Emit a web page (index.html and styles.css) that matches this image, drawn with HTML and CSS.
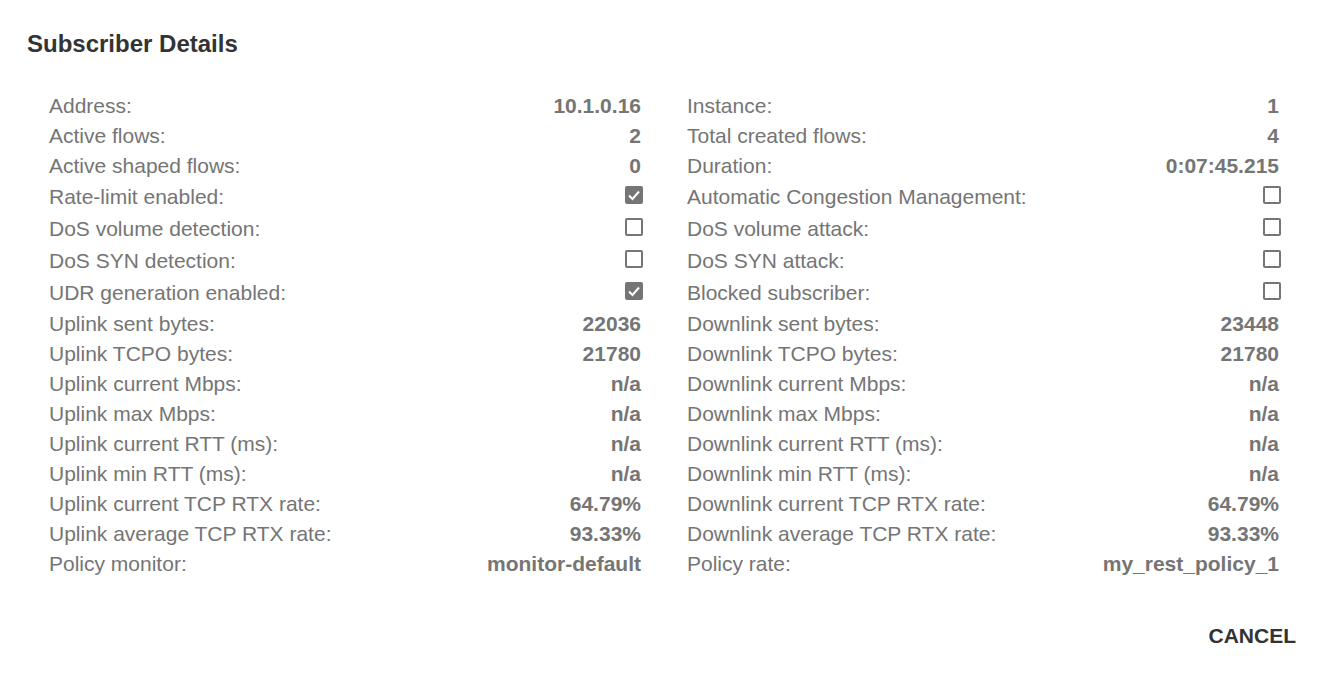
FILE: index.html
```html
<!DOCTYPE html>
<html lang="en">
<head>
  <meta charset="UTF-8" />
  <meta name="viewport" content="width=device-width, initial-scale=1" />
  <title>Subscriber Details</title>
  <link rel="stylesheet" href="styles.css">
</head>
<body>
  <div class="dialog">
    <h2 class="dialog-title">Subscriber Details</h2>

    <div class="details">
      <div class="row"><span class="label">Address:</span><span class="value">10.1.0.16</span></div>
      <div class="row"><span class="label">Instance:</span><span class="value">1</span></div>

      <div class="row"><span class="label">Active flows:</span><span class="value">2</span></div>
      <div class="row"><span class="label">Total created flows:</span><span class="value">4</span></div>

      <div class="row"><span class="label">Active shaped flows:</span><span class="value">0</span></div>
      <div class="row"><span class="label">Duration:</span><span class="value">0:07:45.215</span></div>

      <!-- checkbox rows -->
      <div class="row check-row"><span class="label">Rate-limit enabled:</span><span class="box checked"><svg viewBox="0 0 18 18"><polyline points="4,9.5 7.5,13 14,5.5" /></svg></span></div>
      <div class="row check-row"><span class="label">Automatic Congestion Management:</span><span class="box"></span></div>

      <div class="row check-row"><span class="label">DoS volume detection:</span><span class="box"></span></div>
      <div class="row check-row"><span class="label">DoS volume attack:</span><span class="box"></span></div>

      <div class="row check-row"><span class="label">DoS SYN detection:</span><span class="box"></span></div>
      <div class="row check-row"><span class="label">DoS SYN attack:</span><span class="box"></span></div>

      <div class="row check-row"><span class="label">UDR generation enabled:</span><span class="box checked"><svg viewBox="0 0 18 18"><polyline points="4,9.5 7.5,13 14,5.5" /></svg></span></div>
      <div class="row check-row"><span class="label">Blocked subscriber:</span><span class="box"></span></div>

      <div class="row"><span class="label">Uplink sent bytes:</span><span class="value">22036</span></div>
      <div class="row"><span class="label">Downlink sent bytes:</span><span class="value">23448</span></div>

      <div class="row"><span class="label">Uplink TCPO bytes:</span><span class="value">21780</span></div>
      <div class="row"><span class="label">Downlink TCPO bytes:</span><span class="value">21780</span></div>

      <div class="row"><span class="label">Uplink current Mbps:</span><span class="value">n/a</span></div>
      <div class="row"><span class="label">Downlink current Mbps:</span><span class="value">n/a</span></div>

      <div class="row"><span class="label">Uplink max Mbps:</span><span class="value">n/a</span></div>
      <div class="row"><span class="label">Downlink max Mbps:</span><span class="value">n/a</span></div>

      <div class="row"><span class="label">Uplink current RTT (ms):</span><span class="value">n/a</span></div>
      <div class="row"><span class="label">Downlink current RTT (ms):</span><span class="value">n/a</span></div>

      <div class="row"><span class="label">Uplink min RTT (ms):</span><span class="value">n/a</span></div>
      <div class="row"><span class="label">Downlink min RTT (ms):</span><span class="value">n/a</span></div>

      <div class="row"><span class="label">Uplink current TCP RTX rate:</span><span class="value">64.79%</span></div>
      <div class="row"><span class="label">Downlink current TCP RTX rate:</span><span class="value">64.79%</span></div>

      <div class="row"><span class="label">Uplink average TCP RTX rate:</span><span class="value">93.33%</span></div>
      <div class="row"><span class="label">Downlink average TCP RTX rate:</span><span class="value">93.33%</span></div>

      <div class="row"><span class="label">Policy monitor:</span><span class="value">monitor-default</span></div>
      <div class="row"><span class="label">Policy rate:</span><span class="value">my_rest_policy_1</span></div>
    </div>

    <div class="actions">
      <button class="btn-text">CANCEL</button>
    </div>
  </div>
</body>
</html>
```

FILE: styles.css
```css
body {
  margin: 0;
  background: #fff;
  font-family: "Liberation Sans", Arial, sans-serif;
  color: #757575;
}

.dialog {
  padding: 30px 0 0 0;
}

.dialog-title {
  margin: 0 0 0 27px;
  font-size: 24px;
  line-height: 28px;
  font-weight: bold;
  color: #333;
}

.details {
  display: grid;
  grid-template-columns: 1fr 1fr;
  column-gap: 46px;
  margin: 33px 50px 0 49px;
  font-size: 21px;
}

.row {
  display: flex;
  justify-content: space-between;
  align-items: center;
  height: 30px;
  line-height: 30px;
  white-space: nowrap;
}

.row.check-row {
  height: 32px;
}

.value {
  font-weight: bold;
}

/* checkboxes */
.box {
  width: 14px;
  height: 14px;
  border: 2px solid #757575;
  border-radius: 2px;
  margin-right: -2px;
  margin-bottom: 5px;
  display: flex;
}

.box svg {
  display: none;
}

.box.checked {
  background: #757575;
}

.box.checked svg {
  display: block;
  width: 18px;
  height: 18px;
  margin: -2px;
  fill: none;
  stroke: #fff;
  stroke-width: 2;
}

.actions {
  display: flex;
  justify-content: flex-end;
  margin: 37px 25px 0 0;
}

.btn-text {
  font-family: inherit;
  font-size: 21px;
  line-height: 24px;
  font-weight: bold;
  color: #333;
  background: none;
  border: none;
  padding: 8px;
  cursor: pointer;
}
```
